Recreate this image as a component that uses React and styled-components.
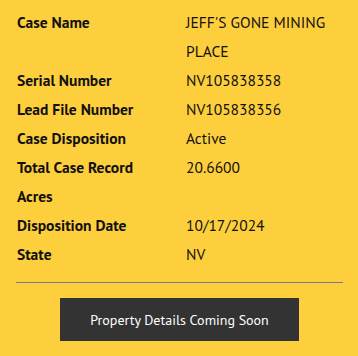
import React from "react";
import styled, { createGlobalStyle } from "styled-components";

const GlobalStyle = createGlobalStyle`
  html, body {
    margin: 0;
    padding: 0;
    background: #fecf3c;
  }
  body {
    font-family: "PT Sans", Lato, "Liberation Sans", sans-serif;
  }
`;

const rows = [
  ["Case Name", "JEFF'S GONE MINING PLACE"],
  ["Serial Number", "NV105838358"],
  ["Lead File Number", "NV105838356"],
  ["Case Disposition", "Active"],
  ["Total Case Record Acres", "20.6600"],
  ["Disposition Date", "10/17/2024"],
  ["State", "NV"],
];

const App = () => {
  return (
    <Container>
      <GlobalStyle />
      <Table>
        {rows.map(([label, value]) => (
          <React.Fragment key={label}>
            <Label>{label}</Label>
            <Value>{value}</Value>
          </React.Fragment>
        ))}
      </Table>
      <Divider />
      <ButtonRow>
        <Button type="button">Property Details Coming Soon</Button>
      </ButtonRow>
    </Container>
  );
};

export default App;

const Container = styled.div`
  width: 358px;
  height: 356px;
  box-sizing: border-box;
  background: #fecf3c;
  padding: 8px 15px 0 17px;
`;

const Table = styled.div`
  display: grid;
  grid-template-columns: 169px 1fr;
  font-size: 15.5px;
  line-height: 29px;
  color: #111;
`;

const Label = styled.div`
  font-weight: 700;
  padding-right: 24px;
`;

const Value = styled.div`
  font-weight: 400;
  padding-right: 8px;
`;

const Divider = styled.hr`
  margin: 13px 0 0 -1px;
  border: none;
  border-top: 1px solid #7a7d8c;
  width: 327px;
`;

const ButtonRow = styled.div`
  display: flex;
  padding: 15px 0 0 43px;
`;

const Button = styled.button`
  width: 239px;
  height: 43px;
  background: #333333;
  color: #ffffff;
  border: none;
  font-family: "PT Sans", Lato, "Liberation Sans", sans-serif;
  font-size: 14px;
  cursor: pointer;
`;
